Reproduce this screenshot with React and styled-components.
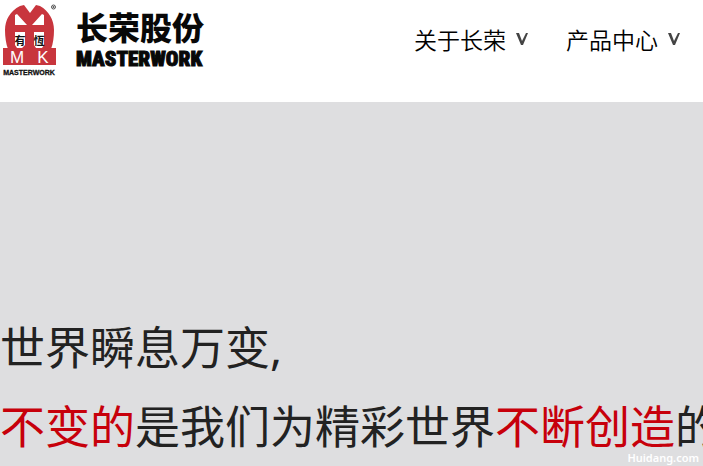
import React from 'react';
import styled, { createGlobalStyle } from 'styled-components';

const GlobalStyle = createGlobalStyle`
  * { box-sizing: border-box; }
  body {
    margin: 0;
    overflow: hidden;
    background: #dedee0;
    color: #222;
    font-family: "Noto Sans CJK SC", sans-serif;
  }
`;

const Page = styled.div`
  position: relative;
  min-height: 100vh;
  display: flex;
  flex-direction: column;
`;

const Header = styled.header`
  display: flex;
  justify-content: space-between;
  height: 102px;
  padding-right: 23px;
  background: #fff;
`;

const Brand = styled.a`
  display: flex;
  gap: 16px;
  color: #080808;
  text-decoration: none;
`;

const Emblem = styled.svg`
  width: 60px;
  height: 80px;
  flex: none;
`;

const BrandText = styled.span`
  display: flex;
  flex-direction: column;
  padding-top: 10px;
  white-space: nowrap;
`;

const ChineseName = styled.span`
  font-size: 32px;
  line-height: 32px;
  font-weight: 900;
`;

const LatinName = styled.span`
  font-family: "Roboto Condensed", "Noto Sans CJK SC", sans-serif;
  font-size: 21px;
  line-height: 34px;
  font-weight: 900;
  -webkit-text-stroke: 1px #080808;
`;

const Nav = styled.nav`
  display: flex;
  gap: 38px;
  padding-top: 23px;
`;

const NavButton = styled.button`
  display: flex;
  align-items: center;
  gap: 10px;
  height: 32px;
  padding: 0;
  border: 0;
  background: none;
  color: #000;
  font: 350 23px/32px "Noto Sans CJK SC", sans-serif;
  white-space: nowrap;
`;

const Chevron = styled.svg`
  width: 12px;
  height: 12px;
`;

const Hero = styled.main`
  flex: 1;
  overflow: hidden;
  padding-top: 206px;
`;

const Slogan = styled.p`
  margin: 0;
  font-family: "Noto Sans", "Noto Sans CJK SC", sans-serif;
  font-size: 45px;
  line-height: 79px;
  font-weight: 400;
  white-space: nowrap;
`;

const Accent = styled.span`
  color: #c7000b;
`;

const Watermark = styled.span`
  position: absolute;
  right: 4px;
  bottom: 0;
  color: #fff;
  font: 600 11px/16px "Noto Sans", sans-serif;
`;

function LogoMark() {
  return (
    <Emblem viewBox="0 0 60 80" aria-hidden="true">
      <path d="M20 6L24 5L30 13L36 5L40 6C49 11 54 20 54 30C54 37 53 44 51 49H8C6 44 5 37 5 30C5 20 10 11 20 6Z" fill="#c8353d" />
      <path d="M17 14L27 25H15V15ZM42 14L32 25H44V15ZM15 32H25V45L22 48H17L15 45ZM34 32H44V45L42 48H36L34 45Z" fill="#fff" />
      <path d="M3 48H56V65H3Z" fill="#c8353d" />
      <g fill="#111" fontFamily="Noto Sans CJK SC, sans-serif" fontSize="11" fontWeight="700" textAnchor="middle">
        <text x="20" y="45">有</text>
        <text x="39" y="45">恆</text>
      </g>
      <g fill="#fff" fontFamily="Liberation Sans, sans-serif" fontSize="17" textAnchor="middle">
        <text x="17" y="63">M</text>
        <text x="43" y="63">K</text>
      </g>
      <text x="29" y="75" fill="#111" fontFamily="Liberation Sans, sans-serif" fontSize="7" fontWeight="700" textAnchor="middle" stroke="#111" strokeWidth=".3">MASTERWORK</text>
      <circle cx="53.500" cy="7" r="2" fill="none" stroke="#555" />
      <circle cx="53.500" cy="7" r="1" fill="#555" />
    </Emblem>
  );
}

function MenuItem({ children }) {
  return (
    <NavButton type="button">
      {children}
      <Chevron viewBox="0 0 12 12" aria-hidden="true">
        <path d="M0 0H3L6 8L10 0H12L7 12H5Z" fill="#444" />
      </Chevron>
    </NavButton>
  );
}

export default function App() {
  return (
    <Page>
      <GlobalStyle />
      <Header>
        <Brand href="#" aria-label="长荣股份 MASTERWORK">
          <LogoMark />
          <BrandText>
            <ChineseName>长荣股份</ChineseName>
            <LatinName>MASTERWORK</LatinName>
          </BrandText>
        </Brand>
        <Nav>
          <MenuItem>关于长荣</MenuItem>
          <MenuItem>产品中心</MenuItem>
        </Nav>
      </Header>
      <Hero>
        <Slogan>世界瞬息万变,</Slogan>
        <Slogan><Accent>不变的</Accent>是我们为精彩世界<Accent>不断创造</Accent>的</Slogan>
      </Hero>
      <Watermark>Huidang.com</Watermark>
    </Page>
  );
}
